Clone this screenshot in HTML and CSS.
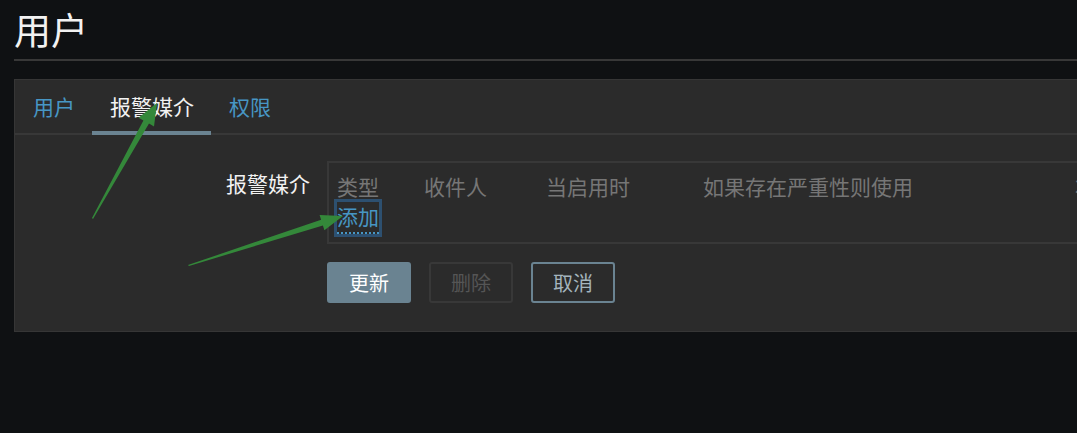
FILE: index.html
```html
<!DOCTYPE html>
<html lang="zh-CN">
<head>
  <meta charset="UTF-8">
  <title>用户</title>
  <meta name="viewport" content="width=device-width, initial-scale=1.0">
  <link rel="stylesheet" href="styles.css">
</head>
<body>
  <header class="page-head">
    <h1>用户</h1>
  </header>

  <div class="panel">
    <ul class="tabs">
      <li><a href="#">用户</a></li>
      <li class="active"><a href="#">报警媒介</a></li>
      <li><a href="#">权限</a></li>
    </ul>

    <div class="tab-body">
      <div class="form-row">
        <label class="form-label">报警媒介</label>
        <div class="media-table">
          <div class="media-head">
            <span class="col-type">类型</span>
            <span class="col-to">收件人</span>
            <span class="col-when">当启用时</span>
            <span class="col-sev">如果存在严重性则使用</span>
            <span class="col-status">状态</span>
          </div>
          <div class="media-add">
            <a href="#" class="link-add">添加</a>
          </div>
        </div>
      </div>

      <div class="actions">
        <button class="btn btn-primary">更新</button>
        <button class="btn btn-disabled" disabled>删除</button>
        <button class="btn btn-alt">取消</button>
      </div>
    </div>
  </div>

  <!-- annotation arrows drawn on the screenshot -->
  <svg class="marks" width="1077" height="433" viewBox="0 0 1077 433">
    <polygon points="92,218 143.4,120.4 138.5,117.8 157,103 154,126.5 149,123.6 93,219" fill="#34883a"/>
    <polygon points="188,265 321.1,219.7 319.6,215 343,216 324.4,230.2 322.9,225.5 189,266" fill="#34883a"/>
  </svg>
</body>
</html>
```

FILE: styles.css
```css
body { margin: 0; background: #0f1113; font-family: "Noto Sans CJK SC", sans-serif; color: #f2f2f2; position: relative; overflow: hidden; height: 433px; }

.page-head { margin: 0 0 18px 14px; padding-top: 5px; border-bottom: 2px solid #383838; padding-bottom: 6px; }
.page-head h1 { margin: 0; font-size: 37px; font-weight: normal; line-height: 48px; }

.panel { margin-left: 14px; background: #2b2b2b; border: 1px solid #363636; border-right: none; }

.tabs { list-style: none; margin: 0; padding: 0; display: flex; border-bottom: 2px solid #383838; height: 53px; }
.tabs li { padding: 0 17px 0 18px; margin-bottom: -2px; border-bottom: 4px solid transparent; line-height: 52px; font-size: 21px; }
.tabs li a { color: #4796c4; text-decoration: none; }
.tabs li.active { border-bottom-color: #6a8391; }
.tabs li.active a { color: #f2f2f2; }

.tab-body { padding: 26px 0 28px; }

.form-row { display: flex; }
.form-label { width: 295px; text-align: right; font-size: 21px; line-height: 26px; padding-top: 9px; margin-right: 17px; }

.media-table { flex: 1; border: 2px solid #383838; border-right: none; padding: 0 0 8px 8px; white-space: nowrap; overflow: hidden; }
.media-head { display: flex; font-size: 21px; line-height: 26px; padding-top: 10px; color: #767676; }
.media-head span { flex-shrink: 0; }
.col-type { width: 87px; }
.col-to { width: 122px; }
.col-when { width: 157px; }
.col-sev { width: 372px; }

.media-add { padding-top: 3px; }
.link-add { display: inline-block; font-size: 21px; line-height: 29px; color: #4796c4; text-decoration: none; border-bottom: 2px dotted #4796c4; padding-bottom: 1px; outline: 3px solid #2d5070; }

.actions { display: flex; gap: 18px; padding: 18px 0 0 312px; }
.btn { width: 84px; height: 41px; font-family: inherit; font-size: 20px; border-radius: 3px; background: transparent; border: 2px solid #383838; color: #555; padding: 0; }
.btn-primary { background: #6a8391; border-color: #6a8391; color: #fff; }
.btn-alt { border-color: #6a8391; color: #a4b4bd; }

.marks { position: absolute; top: 0; left: 0; pointer-events: none; }
```
